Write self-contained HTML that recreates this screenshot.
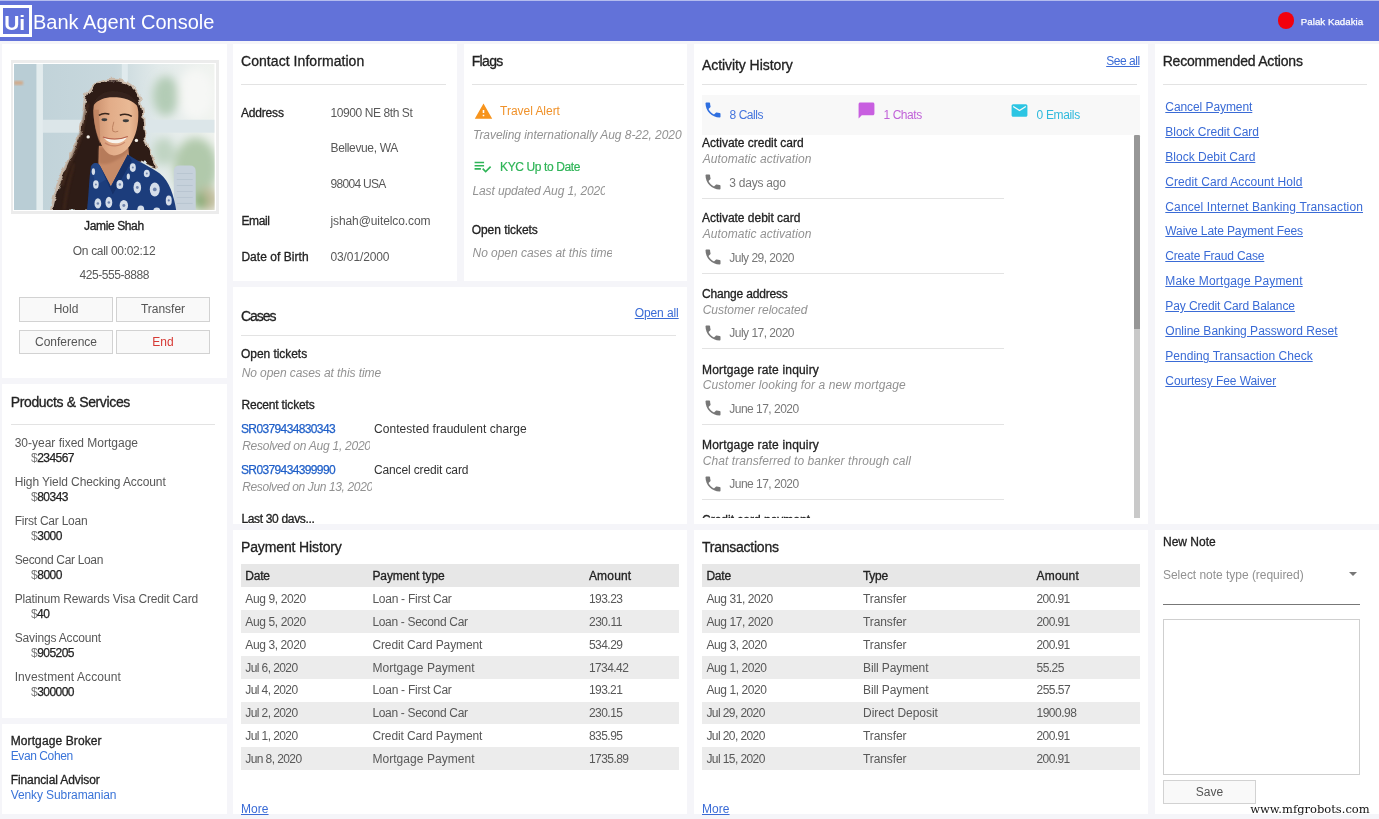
<!DOCTYPE html>
<html lang="en"><head><meta charset="utf-8"><title>UiBank Agent Console</title>
<style>
html,body{margin:0;padding:0}
body{width:1379px;height:819px;overflow:hidden;background:#f5f5f9;position:relative;font-family:"Liberation Sans",sans-serif;font-size:12px;}
#w{position:absolute;left:0;top:0;width:1379px;height:819px;will-change:transform}
.t{position:absolute;white-space:nowrap;line-height:16px;font-size:12px;}
.r{color:#585858}
.d{color:#333}
.b{color:#222;-webkit-text-stroke:0.3px #222}
.i{color:#929292;font-style:italic}
.h{color:#222;font-size:14px;line-height:18px;-webkit-text-stroke:0.3px #222}
.l{color:#3a6bd6;text-decoration:underline;text-underline-offset:0.5px}
.a{color:#3a74d8}
.s{color:#1f5fc8;-webkit-text-stroke:0.25px #1f5fc8}
.amt{color:#222;-webkit-text-stroke:0.25px #222}
.clip{overflow:hidden}
.p{position:absolute;background:#fff}
.hr{position:absolute;height:1px}
.ic{position:absolute}
.hdr{position:absolute;left:0;top:0;width:1379px;height:40.5px;background:#6272d9}
.hdt{position:absolute;left:0;top:0;width:1379px;height:1px;background:#b4bcee}
.logo{position:absolute;left:0;top:5px;width:26px;height:26px;border:3px solid #fff}
.dot{position:absolute;left:1277.5px;top:12.1px;width:16.6px;height:16.6px;border-radius:50%;background:#f2000c}
.frame{position:absolute;left:10.7px;top:60.2px;width:208px;height:153.5px;background:#ececec}
.frin{position:absolute;left:13px;top:62.8px;width:203.1px;height:148.7px;background:#fff}
.photo{position:absolute;left:14.1px;top:64.1px}
.btn{position:absolute;box-sizing:border-box;border:1px solid #d2d2d2;background:#f9f9f9;text-align:center;font-size:12px}
.row{position:absolute;background:#ececec}
.bar{position:absolute;background:#f8f8f8}
.sbt{position:absolute;background:#c9c9c9}
.sbh{position:absolute;background:#979797}
.ta{position:absolute;box-sizing:border-box;border:1px solid #cfcfcf;background:#fff}
.arr{position:absolute;left:1348.5px;top:572px;width:0;height:0;border-left:4.3px solid transparent;border-right:4.3px solid transparent;border-top:4.6px solid #777}
.wm{font-family:"DejaVu Serif","Liberation Serif",serif;font-size:11.5px;color:#111;line-height:16px}
</style></head>
<body>
<div id="w">
<div class="hdr"></div><div class="hdt"></div>
<div class="logo"></div>
<div class="t d" style="left:4.2px;top:10.5px;font-size:21px;letter-spacing:-0.050px;line-height:24px;color:#fff;font-weight:bold;">Ui</div>
<div class="t d" style="left:33.0px;top:10.0px;font-size:20px;letter-spacing:0.009px;line-height:24px;color:#fff;">Bank Agent Console</div>
<div class="dot"></div>
<div class="t d" style="left:1300.8px;top:15.5px;font-size:9.7px;letter-spacing:0.030px;line-height:12px;color:#fff;-webkit-text-stroke:0.25px #fff;">Palak Kadakia</div>
<div class="p" style="left:2.0px;top:44.0px;width:224.5px;height:333.8px;"></div>
<div class="p" style="left:2.0px;top:383.5px;width:224.5px;height:334.3px;"></div>
<div class="p" style="left:2.0px;top:724.0px;width:224.5px;height:90.3px;"></div>
<div class="p" style="left:233.0px;top:44.0px;width:224.0px;height:236.8px;"></div>
<div class="p" style="left:463.5px;top:44.0px;width:223.5px;height:236.8px;"></div>
<div class="p" style="left:233.0px;top:287.0px;width:454.0px;height:236.5px;"></div>
<div class="p" style="left:233.0px;top:530.0px;width:454.0px;height:284.3px;"></div>
<div class="p" style="left:694.0px;top:44.0px;width:453.5px;height:479.5px;"></div>
<div class="p" style="left:694.0px;top:530.0px;width:453.5px;height:284.3px;"></div>
<div class="p" style="left:1154.5px;top:44.0px;width:224.5px;height:479.5px;"></div>
<div class="p" style="left:1154.5px;top:530.0px;width:224.5px;height:284.3px;"></div>
<div class="frame"></div><div class="frin"></div>
<svg class="photo" width="200.7" height="146.4" viewBox="0 0 201 147" preserveAspectRatio="none">
<defs>
<filter id="b1" x="-20%" y="-20%" width="140%" height="140%"><feGaussianBlur stdDeviation="0.9"/></filter>
<filter id="b3" x="-30%" y="-30%" width="160%" height="160%"><feGaussianBlur stdDeviation="5"/></filter>
<filter id="b05" x="-10%" y="-10%" width="120%" height="120%"><feGaussianBlur stdDeviation="0.55"/></filter>
<filter id="curl" x="-10%" y="-10%" width="120%" height="120%"><feTurbulence type="fractalNoise" baseFrequency="0.11" numOctaves="2" seed="7" result="n"/><feDisplacementMap in="SourceGraphic" in2="n" scale="7" xChannelSelector="R" yChannelSelector="G"/><feGaussianBlur stdDeviation="0.6"/></filter>
<linearGradient id="bg" x1="0" x2="1" y1="0" y2="0"><stop offset="0" stop-color="#bfd1d8"/><stop offset="0.5" stop-color="#c8d8dd"/><stop offset="0.72" stop-color="#e2eaea"/><stop offset="1" stop-color="#f0f3ef"/></linearGradient>
<linearGradient id="skin" x1="0" x2="1" y1="0" y2="0"><stop offset="0" stop-color="#c98f6c"/><stop offset="0.35" stop-color="#e2ac88"/><stop offset="0.8" stop-color="#e9b995"/><stop offset="1" stop-color="#d9a17c"/></linearGradient>
<clipPath id="cp"><rect width="201" height="147"/></clipPath>
</defs>
<g clip-path="url(#cp)">
<rect width="201" height="147" fill="url(#bg)"/>
<rect x="0" y="0" width="22.5" height="147" fill="#b9cdd5"/>
<rect x="22.5" y="0" width="6.5" height="147" fill="#e3ecee"/>
<rect x="108" y="0" width="6" height="60" fill="#e0eaed"/>
<g filter="url(#b3)">
<ellipse cx="152" cy="32" rx="13" ry="20" fill="#b3ccb6"/>
<ellipse cx="182" cy="104" rx="22" ry="30" fill="#b1c9ab"/>
<ellipse cx="194" cy="136" rx="12" ry="12" fill="#c2bd9d"/>
<ellipse cx="186" cy="138" rx="7" ry="9" fill="#86ab74"/>
<ellipse cx="182" cy="30" rx="18" ry="26" fill="#f6f7f5"/>
<ellipse cx="150" cy="88" rx="11" ry="14" fill="#c0d4c2"/>
</g>
<rect x="29" y="56" width="172" height="13" fill="#dce6e9" filter="url(#b05)"/>
<rect x="0" y="17" width="9" height="4" fill="#d8a074" opacity=".75" filter="url(#b1)"/>
<!-- chair -->
<path d="M160 108 q0 -6 6 -6 h10 q6 0 6 6 v39 h-22z" fill="#c6d1db" filter="url(#b05)"/>
<path d="M163 110 h16 M163 116 h16 M163 122 h16 M163 128 h16 M163 134 h16 M163 140 h16" stroke="#b4c1cd" stroke-width="1" opacity=".7"/>
<!-- hair halo -->
<path d="M98 15 C82 14 70 26 69 42 C68 56 66 68 59 84 C50 102 42 118 36 147 L80 147 L84 100 L126 98 L146 106 C141 94 135 86 132 72 C130 58 131 46 128 36 C124 22 112 14 98 15Z" fill="#c9ab93" opacity=".7" filter="url(#curl)"/>
<!-- hair -->
<g filter="url(#curl)">
<path d="M98 17.5 C84 16 72 27 71.5 42 C71 56 68 68 62 84 C53 102 45 118 39 147 L80 147 L84 100 L126 98 L143 104 C139 94 134 86 130.5 72 C128.5 58 129 46 126 37 C122.5 24 111 16.5 98 17.5Z" fill="#2e1e18"/>
</g>
<path d="M74 40 C70 52 70 64 65 78 C60 92 52 106 48 122" stroke="#4f3122" stroke-width="2.5" fill="none" opacity=".7" filter="url(#b1)"/>
<path d="M60 100 C56 114 52 128 50 147" stroke="#45291d" stroke-width="3" fill="none" opacity=".6" filter="url(#b1)"/>
<!-- neck -->
<path d="M85 82 L84.5 103 L97 123 L115.5 95 L114.5 84Z" fill="#c78b68" filter="url(#b05)"/>
<path d="M85 84 L85 100 C92 102 104 98 114 88 L114.5 84Z" fill="#a96e50" opacity=".55" filter="url(#b1)"/>
<!-- shirt -->
<path d="M77 103 C80 98 84 99 86 102 L97 123 L114 91 C124 98 138 104 146 110 C156 118 160 132 162.5 147 L73 147 C75 132 75 116 77 103Z" fill="#1d3c7c" filter="url(#b05)"/>
<path d="M86 102 L97 123 L114 91 L118 97 L99 131Z" fill="#15306a" filter="url(#b05)"/>
<path d="M77 103 C80 98 84 99 86 102 L92 116 L82 122Z" fill="#244688" filter="url(#b05)"/>
<!-- floral motifs -->
<g fill="#d5deea" filter="url(#b05)">
<ellipse cx="82" cy="121" rx="2.8" ry="4.2"/><ellipse cx="84" cy="140" rx="3.4" ry="5.2"/><ellipse cx="95" cy="139" rx="3.4" ry="5.6"/>
<ellipse cx="106" cy="121" rx="3.4" ry="4.6"/><ellipse cx="110" cy="142" rx="4.2" ry="5.4"/><ellipse cx="123.5" cy="124" rx="3.8" ry="6"/>
<ellipse cx="127" cy="146" rx="3.4" ry="4"/><ellipse cx="141" cy="126" rx="5" ry="7"/><ellipse cx="143" cy="147" rx="3.4" ry="3"/>
<ellipse cx="119" cy="104" rx="3" ry="4.4"/><ellipse cx="133" cy="110" rx="3" ry="3.8"/><ellipse cx="155" cy="137" rx="3" ry="5"/>
<ellipse cx="79.5" cy="108" rx="1.7" ry="3.4"/><ellipse cx="114.5" cy="113" rx="1.6" ry="3"/>
</g>
<g fill="#1d3c7c" opacity=".55">
<circle cx="82" cy="121" r="1"/><circle cx="84" cy="140" r="1.3"/><circle cx="95" cy="139" r="1.3"/><circle cx="106" cy="121" r="1.2"/><circle cx="110" cy="142" r="1.5"/><circle cx="123.5" cy="124" r="1.4"/><circle cx="141" cy="126" r="1.9"/><circle cx="119" cy="104" r="1"/><circle cx="133" cy="110" r="1"/><circle cx="155" cy="137" r="1.1"/>
</g>
<!-- face -->
<g filter="url(#b05)">
<path d="M79.5 46 C79.5 34 88 29 99 29 C112 29 124 34 124.5 48 C125 60 122.5 72 116 82 C110 90 102 93.5 96 91 C88 87 79.5 66 79.5 46Z" fill="url(#skin)"/>
<path d="M79 42 C82 32 90 27 99 27 C111 27 122 32 125 44 C119 36 110 33.5 99 33.5 C91 33.5 84 36 79 42Z" fill="#34221a"/>
<path d="M79.5 46 C79.5 58 82 70 86 80 C87 70 85 58 85 46Z" fill="#b97c5a" opacity=".6"/>
<path d="M85 51.5 q5 -3 10.5 -1" stroke="#38251c" stroke-width="1.5" fill="none"/><path d="M106 51.5 q6 -2.5 12 1" stroke="#38251c" stroke-width="1.5" fill="none"/>
<ellipse cx="90.5" cy="56" rx="3" ry="1.4" fill="#3e3d3c"/><ellipse cx="112" cy="57" rx="3.1" ry="1.4" fill="#3e3d3c"/>
<path d="M90 74 C96 76.5 105 76.5 113 73.5 C109 81 96 82 90 74Z" fill="#f8f3ec"/>
<path d="M89 73.3 C96 75.8 106 75.8 114 72.8" stroke="#b5614d" stroke-width="1.1" fill="none"/>
<path d="M91 79 C97 83.5 106 83 111 78.5" stroke="#c27a60" stroke-width="1.2" fill="none" opacity=".8"/>
<path d="M100 58 q-2.2 6.5 -1 9.5 q2.4 1.5 5.4 0" stroke="#bd8260" stroke-width="1" fill="none"/>
<circle cx="74.3" cy="73.2" r="1.7" fill="#f6f3ec"/><circle cx="122.6" cy="76.7" r="1.7" fill="#f6f3ec"/>
</g>
</g>
</svg>

<div class="t b" style="left:84.1px;top:218.0px;letter-spacing:-0.377px;">Jamie Shah</div>
<div class="t r" style="left:72.7px;top:243.0px;letter-spacing:-0.300px;">On call 00:02:12</div>
<div class="t r" style="left:79.5px;top:267.0px;letter-spacing:-0.428px;">425-555-8888</div>
<div class="btn" style="left:19.0px;top:297.0px;width:94.0px;height:25.0px;line-height:22.4px;color:#555">Hold</div>
<div class="btn" style="left:116.0px;top:297.0px;width:94.0px;height:25.0px;line-height:22.4px;color:#555">Transfer</div>
<div class="btn" style="left:19.0px;top:330.0px;width:94.0px;height:24.0px;line-height:23.0px;color:#555">Conference</div>
<div class="btn" style="left:116.0px;top:330.0px;width:94.0px;height:24.0px;line-height:23.0px;color:#d63a35">End</div>
<div class="t h" style="left:10.7px;top:393.0px;letter-spacing:-0.355px;">Products &amp; Services</div>
<div class="hr" style="left:10.5px;top:423.5px;width:204.0px;background:#e3e3e3"></div>
<div class="t r" style="left:14.7px;top:435.0px;letter-spacing:-0.005px;">30-year fixed Mortgage</div>
<div class="t r" style="left:31px;top:450.2px;letter-spacing:-0.531px"><span style="color:#777">$</span><span class="amt">234567</span></div>
<div class="t r" style="left:14.7px;top:474.0px;letter-spacing:-0.090px;">High Yield Checking Account</div>
<div class="t r" style="left:31px;top:489.2px;letter-spacing:-0.507px"><span style="color:#777">$</span><span class="amt">80343</span></div>
<div class="t r" style="left:14.7px;top:513.0px;letter-spacing:-0.238px;">First Car Loan</div>
<div class="t r" style="left:31px;top:528.2px;letter-spacing:-0.474px"><span style="color:#777">$</span><span class="amt">3000</span></div>
<div class="t r" style="left:14.7px;top:552.0px;letter-spacing:-0.340px;">Second Car Loan</div>
<div class="t r" style="left:31px;top:567.2px;letter-spacing:-0.474px"><span style="color:#777">$</span><span class="amt">8000</span></div>
<div class="t r" style="left:14.7px;top:591.0px;letter-spacing:-0.158px;">Platinum Rewards Visa Credit Card</div>
<div class="t r" style="left:31px;top:606.2px;letter-spacing:-0.574px"><span style="color:#777">$</span><span class="amt">40</span></div>
<div class="t r" style="left:14.7px;top:630.0px;letter-spacing:-0.162px;">Savings Account</div>
<div class="t r" style="left:31px;top:645.2px;letter-spacing:-0.531px"><span style="color:#777">$</span><span class="amt">905205</span></div>
<div class="t r" style="left:14.7px;top:669.0px;letter-spacing:0.088px;">Investment Account</div>
<div class="t r" style="left:31px;top:684.2px;letter-spacing:-0.531px"><span style="color:#777">$</span><span class="amt">300000</span></div>
<div class="t b" style="left:10.7px;top:733.0px;letter-spacing:0.108px;">Mortgage Broker</div>
<div class="t a" style="left:10.7px;top:748.0px;letter-spacing:-0.405px;">Evan Cohen</div>
<div class="t b" style="left:10.7px;top:772.0px;letter-spacing:-0.101px;">Financial Advisor</div>
<div class="t a" style="left:10.7px;top:787.0px;letter-spacing:-0.100px;">Venky Subramanian</div>
<div class="t h" style="left:241.0px;top:52.0px;letter-spacing:0.059px;">Contact Information</div>
<div class="hr" style="left:241.0px;top:83.8px;width:204.7px;background:#e3e3e3"></div>
<div class="t b" style="left:241.0px;top:105.0px;letter-spacing:-0.189px;">Address</div>
<div class="t r" style="left:330.5px;top:105.0px;letter-spacing:-0.417px;">10900 NE 8th St</div>
<div class="t r" style="left:330.5px;top:140.0px;letter-spacing:-0.357px;">Bellevue, WA</div>
<div class="t r" style="left:330.5px;top:176.0px;letter-spacing:-0.697px;">98004 USA</div>
<div class="t b" style="left:241.4px;top:213.0px;letter-spacing:-0.381px;">Email</div>
<div class="t r" style="left:330.5px;top:213.0px;letter-spacing:-0.098px;">jshah@uitelco.com</div>
<div class="t b" style="left:241.4px;top:249.0px;letter-spacing:0.039px;">Date of Birth</div>
<div class="t r" style="left:330.5px;top:249.0px;letter-spacing:-0.116px;">03/01/2000</div>
<div class="t h" style="left:471.7px;top:52.0px;letter-spacing:-0.647px;">Flags</div>
<div class="hr" style="left:472.0px;top:83.8px;width:212.2px;background:#e3e3e3"></div>
<svg class="ic" style="left:473.9px;top:102.3px" width="19" height="19" viewBox="0 0 24 24"><path fill="#f7941d" d="M1 21h22L12 2 1 21zm12-3h-2v-2h2v2zm0-4h-2v-4h2v4z"/></svg>
<div class="t r" style="left:500.1px;top:103.0px;letter-spacing:-0.037px;color:#f0922b;">Travel Alert</div>
<div class="t i" style="left:473.0px;top:127.0px;letter-spacing:-0.055px;">Traveling internationally Aug 8-22, 2020</div>
<svg class="ic" style="left:473.4px;top:157.3px" width="19" height="19" viewBox="0 0 24 24"><path fill="#2fb457" d="M14 10H2v2h12v-2zm0-4H2v2h12V6zM2 16h8v-2H2v2zm19.5-4.5L23 13l-6.99 7-4.51-4.5L13 14l3.01 3 5.49-5.5z"/></svg>
<div class="t r" style="left:500.1px;top:159.0px;letter-spacing:-0.384px;color:#2fb457;-webkit-text-stroke:0.2px #2fb457;">KYC Up to Date</div>
<div class="t i clip" style="left:472.5px;top:182.6px;width:132.4px;letter-spacing:-0.12px">Last updated Aug 1, 2020</div>
<div class="t b" style="left:471.7px;top:222.0px;letter-spacing:-0.050px;">Open tickets</div>
<div class="t i clip" style="left:472.5px;top:244.5px;width:139.2px;letter-spacing:-0.03px">No open cases at this time</div>
<div class="t h" style="left:241.0px;top:307.0px;letter-spacing:-1.057px;">Cases</div>
<div class="t l" style="left:634.7px;top:305.0px;letter-spacing:-0.087px;">Open all</div>
<div class="hr" style="left:241.0px;top:334.7px;width:434.7px;background:#e3e3e3"></div>
<div class="t b" style="left:241.0px;top:346.0px;letter-spacing:-0.050px;">Open tickets</div>
<div class="t i" style="left:241.7px;top:365.0px;letter-spacing:-0.081px;">No open cases at this time</div>
<div class="t b" style="left:241.4px;top:397.0px;letter-spacing:-0.162px;">Recent tickets</div>
<div class="t s" style="left:241.0px;top:421.0px;letter-spacing:-0.629px;">SR0379434830343</div>
<div class="t d" style="left:374.0px;top:421.0px;letter-spacing:0.047px;">Contested fraudulent charge</div>
<div class="t i clip" style="left:242.2px;top:438.2px;width:127.6px;letter-spacing:-0.25px">Resolved on Aug 1, 2020</div>
<div class="t s" style="left:241.0px;top:462.0px;letter-spacing:-0.629px;">SR0379434399990</div>
<div class="t d" style="left:374.0px;top:462.0px;letter-spacing:-0.134px;">Cancel credit card</div>
<div class="t i clip" style="left:242.2px;top:478.6px;width:129.6px;letter-spacing:-0.37px">Resolved on Jun 13, 2020</div>
<div class="t b clip" style="left:241.4px;top:510.9px;width:200px;height:12.6px;letter-spacing:-0.33px">Last 30 days...</div>
<div class="t h" style="left:241.0px;top:538.0px;letter-spacing:-0.133px;">Payment History</div>
<div class="row" style="left:241.0px;top:564.3px;width:438.0px;height:22.9px;background:#e7e7e7;"></div>
<div class="t b" style="left:245.3px;top:568.0px;letter-spacing:-0.212px;">Date</div>
<div class="t b" style="left:372.4px;top:568.0px;letter-spacing:-0.089px;">Payment type</div>
<div class="t b" style="left:588.9px;top:568.0px;letter-spacing:0.191px;">Amount</div>
<div class="t r" style="left:245.3px;top:591.0px;letter-spacing:-0.375px;">Aug 9, 2020</div>
<div class="t r" style="left:372.4px;top:591.0px;letter-spacing:-0.260px;">Loan - First Car</div>
<div class="t r" style="left:588.9px;top:591.0px;letter-spacing:-0.517px;">193.23</div>
<div class="row" style="left:241.0px;top:610.0px;width:438.0px;height:22.9px;"></div>
<div class="t r" style="left:245.3px;top:614.0px;letter-spacing:-0.375px;">Aug 5, 2020</div>
<div class="t r" style="left:372.4px;top:614.0px;letter-spacing:-0.319px;">Loan - Second Car</div>
<div class="t r" style="left:588.9px;top:614.0px;letter-spacing:-0.435px;">230.11</div>
<div class="t r" style="left:245.3px;top:637.0px;letter-spacing:-0.393px;">Aug 3, 2020</div>
<div class="t r" style="left:372.4px;top:637.0px;letter-spacing:-0.113px;">Credit Card Payment</div>
<div class="t r" style="left:588.9px;top:637.0px;letter-spacing:-0.517px;">534.29</div>
<div class="row" style="left:241.0px;top:655.7px;width:438.0px;height:22.9px;"></div>
<div class="t r" style="left:245.3px;top:660.0px;letter-spacing:-0.592px;">Jul 6, 2020</div>
<div class="t r" style="left:372.4px;top:660.0px;letter-spacing:0.051px;">Mortgage Payment</div>
<div class="t r" style="left:588.9px;top:660.0px;letter-spacing:-0.568px;">1734.42</div>
<div class="t r" style="left:245.3px;top:682.0px;letter-spacing:-0.592px;">Jul 4, 2020</div>
<div class="t r" style="left:372.4px;top:682.0px;letter-spacing:-0.260px;">Loan - First Car</div>
<div class="t r" style="left:588.9px;top:682.0px;letter-spacing:-0.551px;">193.21</div>
<div class="row" style="left:241.0px;top:701.5px;width:438.0px;height:22.9px;"></div>
<div class="t r" style="left:245.3px;top:705.0px;letter-spacing:-0.592px;">Jul 2, 2020</div>
<div class="t r" style="left:372.4px;top:705.0px;letter-spacing:-0.319px;">Loan - Second Car</div>
<div class="t r" style="left:588.9px;top:705.0px;letter-spacing:-0.517px;">230.15</div>
<div class="t r" style="left:245.3px;top:728.0px;letter-spacing:-0.592px;">Jul 1, 2020</div>
<div class="t r" style="left:372.4px;top:728.0px;letter-spacing:-0.113px;">Credit Card Payment</div>
<div class="t r" style="left:588.9px;top:728.0px;letter-spacing:-0.517px;">835.95</div>
<div class="row" style="left:241.0px;top:747.2px;width:438.0px;height:22.9px;"></div>
<div class="t r" style="left:245.3px;top:751.0px;letter-spacing:-0.593px;">Jun 8, 2020</div>
<div class="t r" style="left:372.4px;top:751.0px;letter-spacing:0.051px;">Mortgage Payment</div>
<div class="t r" style="left:588.9px;top:751.0px;letter-spacing:-0.540px;">1735.89</div>
<div class="t l" style="left:241.0px;top:801.0px;letter-spacing:0.050px;">More</div>
<div class="t h" style="left:702.0px;top:538.0px;letter-spacing:-0.244px;">Transactions</div>
<div class="row" style="left:702.0px;top:564.3px;width:437.8px;height:22.9px;background:#e7e7e7;"></div>
<div class="t b" style="left:706.4px;top:568.0px;letter-spacing:-0.212px;">Date</div>
<div class="t b" style="left:863.0px;top:568.0px;letter-spacing:-0.304px;">Type</div>
<div class="t b" style="left:1036.5px;top:568.0px;letter-spacing:0.191px;">Amount</div>
<div class="t r" style="left:706.4px;top:591.0px;letter-spacing:-0.416px;">Aug 31, 2020</div>
<div class="t r" style="left:863.0px;top:591.0px;letter-spacing:-0.104px;">Transfer</div>
<div class="t r" style="left:1036.5px;top:591.0px;letter-spacing:-0.584px;">200.91</div>
<div class="row" style="left:702.0px;top:610.0px;width:437.8px;height:22.9px;"></div>
<div class="t r" style="left:706.4px;top:614.0px;letter-spacing:-0.416px;">Aug 17, 2020</div>
<div class="t r" style="left:863.0px;top:614.0px;letter-spacing:-0.104px;">Transfer</div>
<div class="t r" style="left:1036.5px;top:614.0px;letter-spacing:-0.584px;">200.91</div>
<div class="t r" style="left:706.4px;top:637.0px;letter-spacing:-0.393px;">Aug 3, 2020</div>
<div class="t r" style="left:863.0px;top:637.0px;letter-spacing:-0.104px;">Transfer</div>
<div class="t r" style="left:1036.5px;top:637.0px;letter-spacing:-0.584px;">200.91</div>
<div class="row" style="left:702.0px;top:655.7px;width:437.8px;height:22.9px;"></div>
<div class="t r" style="left:706.4px;top:660.0px;letter-spacing:-0.411px;">Aug 1, 2020</div>
<div class="t r" style="left:863.0px;top:660.0px;letter-spacing:-0.108px;">Bill Payment</div>
<div class="t r" style="left:1036.5px;top:660.0px;letter-spacing:-0.526px;">55.25</div>
<div class="t r" style="left:706.4px;top:682.0px;letter-spacing:-0.411px;">Aug 1, 2020</div>
<div class="t r" style="left:863.0px;top:682.0px;letter-spacing:-0.108px;">Bill Payment</div>
<div class="t r" style="left:1036.5px;top:682.0px;letter-spacing:-0.517px;">255.57</div>
<div class="row" style="left:702.0px;top:701.5px;width:437.8px;height:22.9px;"></div>
<div class="t r" style="left:706.4px;top:705.0px;letter-spacing:-0.582px;">Jul 29, 2020</div>
<div class="t r" style="left:863.0px;top:705.0px;letter-spacing:-0.040px;">Direct Deposit</div>
<div class="t r" style="left:1036.5px;top:705.0px;letter-spacing:-0.511px;">1900.98</div>
<div class="t r" style="left:706.4px;top:728.0px;letter-spacing:-0.582px;">Jul 20, 2020</div>
<div class="t r" style="left:863.0px;top:728.0px;letter-spacing:-0.104px;">Transfer</div>
<div class="t r" style="left:1036.5px;top:728.0px;letter-spacing:-0.584px;">200.91</div>
<div class="row" style="left:702.0px;top:747.2px;width:437.8px;height:22.9px;"></div>
<div class="t r" style="left:706.4px;top:751.0px;letter-spacing:-0.582px;">Jul 15, 2020</div>
<div class="t r" style="left:863.0px;top:751.0px;letter-spacing:-0.104px;">Transfer</div>
<div class="t r" style="left:1036.5px;top:751.0px;letter-spacing:-0.584px;">200.91</div>
<div class="t l" style="left:702.0px;top:801.0px;letter-spacing:0.050px;">More</div>
<div class="t h" style="left:702.0px;top:56.0px;letter-spacing:-0.068px;">Activity History</div>
<div class="t l" style="left:1106.2px;top:53.0px;letter-spacing:-0.470px;">See all</div>
<div class="hr" style="left:701.5px;top:83.8px;width:435.6px;background:#e3e3e3"></div>
<div class="bar" style="left:702.0px;top:95.0px;width:437.6px;height:40.0px;"></div>
<svg class="ic" style="left:702.9px;top:100.4px" width="20" height="20" viewBox="0 0 24 24"><path fill="#2f6fe0" d="M6.62 10.79c1.44 2.83 3.76 5.14 6.59 6.59l2.2-2.2c.27-.27.67-.36 1.02-.24 1.12.37 2.33.57 3.57.57.55 0 1 .45 1 1V20c0 .55-.45 1-1 1-9.39 0-17-7.61-17-17 0-.55.45-1 1-1h3.5c.55 0 1 .45 1 1 0 1.25.2 2.45.57 3.57.11.35.03.74-.25 1.02l-2.2 2.2z"/></svg>
<div class="t r" style="left:729.6px;top:107.0px;letter-spacing:-0.483px;color:#4374dd;">8 Calls</div>
<svg class="ic" style="left:856.8px;top:100.6px" width="19" height="19" viewBox="0 0 24 24"><path fill="#c85fe0" d="M20 2H4c-1.1 0-2 .9-2 2v18l4-4h14c1.1 0 2-.9 2-2V4c0-1.1-.9-2-2-2z"/></svg>
<div class="t r" style="left:883.5px;top:107.0px;letter-spacing:-0.437px;color:#c062d8;">1 Chats</div>
<svg class="ic" style="left:1010.4px;top:100.7px" width="19" height="19" viewBox="0 0 24 24"><path fill="#2cc5e3" d="M20 4H4c-1.1 0-1.99.9-1.99 2L2 18c0 1.1.9 2 2 2h16c1.1 0 2-.9 2-2V6c0-1.1-.9-2-2-2zm0 4l-8 5-8-5V6l8 5 8-5v2z"/></svg>
<div class="t r" style="left:1036.6px;top:107.0px;letter-spacing:-0.352px;color:#2fb9dc;">0 Emails</div>
<div class="sbt" style="left:1134.1px;top:135.4px;width:5.5px;height:383.0px;"></div>
<div class="sbh" style="left:1134.1px;top:135.4px;width:5.5px;height:193.9px;border-radius:1.5px 1.5px 0 0;"></div>
<div class="t b" style="left:702.0px;top:135.0px;letter-spacing:-0.022px;">Activate credit card</div>
<div class="t i" style="left:702.7px;top:151.0px;letter-spacing:0.066px;">Automatic activation</div>
<svg class="ic" style="left:702.7px;top:171.7px" width="20" height="20" viewBox="0 0 24 24"><path fill="#777" d="M6.62 10.79c1.44 2.83 3.76 5.14 6.59 6.59l2.2-2.2c.27-.27.67-.36 1.02-.24 1.12.37 2.33.57 3.57.57.55 0 1 .45 1 1V20c0 .55-.45 1-1 1-9.39 0-17-7.61-17-17 0-.55.45-1 1-1h3.5c.55 0 1 .45 1 1 0 1.25.2 2.45.57 3.57.11.35.03.74-.25 1.02l-2.2 2.2z"/></svg>
<div class="t r" style="left:729.3px;top:175.0px;letter-spacing:-0.231px;color:#777;">3 days ago</div>
<div class="hr" style="left:702.0px;top:197.5px;width:302.0px;background:#e3e3e3"></div>
<div class="t b" style="left:702.0px;top:210.0px;letter-spacing:-0.022px;">Activate debit card</div>
<div class="t i" style="left:702.7px;top:226.0px;letter-spacing:0.066px;">Automatic activation</div>
<svg class="ic" style="left:702.7px;top:246.9px" width="20" height="20" viewBox="0 0 24 24"><path fill="#777" d="M6.62 10.79c1.44 2.83 3.76 5.14 6.59 6.59l2.2-2.2c.27-.27.67-.36 1.02-.24 1.12.37 2.33.57 3.57.57.55 0 1 .45 1 1V20c0 .55-.45 1-1 1-9.39 0-17-7.61-17-17 0-.55.45-1 1-1h3.5c.55 0 1 .45 1 1 0 1.25.2 2.45.57 3.57.11.35.03.74-.25 1.02l-2.2 2.2z"/></svg>
<div class="t r" style="left:729.3px;top:250.0px;letter-spacing:-0.514px;color:#777;">July 29, 2020</div>
<div class="hr" style="left:702.0px;top:272.7px;width:302.0px;background:#e3e3e3"></div>
<div class="t b" style="left:702.0px;top:286.0px;letter-spacing:-0.169px;">Change address</div>
<div class="t i" style="left:702.7px;top:302.0px;">Customer relocated</div>
<svg class="ic" style="left:702.7px;top:322.5px" width="20" height="20" viewBox="0 0 24 24"><path fill="#777" d="M6.62 10.79c1.44 2.83 3.76 5.14 6.59 6.59l2.2-2.2c.27-.27.67-.36 1.02-.24 1.12.37 2.33.57 3.57.57.55 0 1 .45 1 1V20c0 .55-.45 1-1 1-9.39 0-17-7.61-17-17 0-.55.45-1 1-1h3.5c.55 0 1 .45 1 1 0 1.25.2 2.45.57 3.57.11.35.03.74-.25 1.02l-2.2 2.2z"/></svg>
<div class="t r" style="left:729.3px;top:325.0px;letter-spacing:-0.514px;color:#777;">July 17, 2020</div>
<div class="hr" style="left:702.0px;top:348.3px;width:302.0px;background:#e3e3e3"></div>
<div class="t b" style="left:702.0px;top:362.0px;letter-spacing:0.172px;">Mortgage rate inquiry</div>
<div class="t i" style="left:702.7px;top:377.0px;letter-spacing:0.083px;">Customer looking for a new mortgage</div>
<svg class="ic" style="left:702.7px;top:398.0px" width="20" height="20" viewBox="0 0 24 24"><path fill="#777" d="M6.62 10.79c1.44 2.83 3.76 5.14 6.59 6.59l2.2-2.2c.27-.27.67-.36 1.02-.24 1.12.37 2.33.57 3.57.57.55 0 1 .45 1 1V20c0 .55-.45 1-1 1-9.39 0-17-7.61-17-17 0-.55.45-1 1-1h3.5c.55 0 1 .45 1 1 0 1.25.2 2.45.57 3.57.11.35.03.74-.25 1.02l-2.2 2.2z"/></svg>
<div class="t r" style="left:729.3px;top:401.0px;letter-spacing:-0.521px;color:#777;">June 17, 2020</div>
<div class="hr" style="left:702.0px;top:423.8px;width:302.0px;background:#e3e3e3"></div>
<div class="t b" style="left:702.0px;top:437.0px;letter-spacing:0.172px;">Mortgage rate inquiry</div>
<div class="t i" style="left:702.7px;top:453.0px;letter-spacing:0.073px;">Chat transferred to banker through call</div>
<svg class="ic" style="left:702.7px;top:473.6px" width="20" height="20" viewBox="0 0 24 24"><path fill="#777" d="M6.62 10.79c1.44 2.83 3.76 5.14 6.59 6.59l2.2-2.2c.27-.27.67-.36 1.02-.24 1.12.37 2.33.57 3.57.57.55 0 1 .45 1 1V20c0 .55-.45 1-1 1-9.39 0-17-7.61-17-17 0-.55.45-1 1-1h3.5c.55 0 1 .45 1 1 0 1.25.2 2.45.57 3.57.11.35.03.74-.25 1.02l-2.2 2.2z"/></svg>
<div class="t r" style="left:729.3px;top:476.0px;letter-spacing:-0.521px;color:#777;">June 17, 2020</div>
<div class="hr" style="left:702.0px;top:499.4px;width:302.0px;background:#e3e3e3"></div>
<div class="t b clip" style="left:702px;top:512px;width:200px;height:6.4px;">Credit card payment</div>
<div class="t h" style="left:1162.7px;top:52.0px;letter-spacing:-0.209px;">Recommended Actions</div>
<div class="hr" style="left:1162.7px;top:83.8px;width:204.6px;background:#e3e3e3"></div>
<div class="t l" style="left:1165.3px;top:99.0px;letter-spacing:-0.075px;">Cancel Payment</div>
<div class="t l" style="left:1165.3px;top:124.0px;letter-spacing:-0.020px;">Block Credit Card</div>
<div class="t l" style="left:1165.3px;top:149.0px;">Block Debit Card</div>
<div class="t l" style="left:1165.3px;top:174.0px;letter-spacing:0.079px;">Credit Card Account Hold</div>
<div class="t l" style="left:1165.3px;top:199.0px;letter-spacing:0.121px;">Cancel Internet Banking Transaction</div>
<div class="t l" style="left:1165.3px;top:223.0px;letter-spacing:-0.112px;">Waive Late Payment Fees</div>
<div class="t l" style="left:1165.3px;top:248.0px;letter-spacing:-0.179px;">Create Fraud Case</div>
<div class="t l" style="left:1165.3px;top:273.0px;letter-spacing:0.159px;">Make Mortgage Payment</div>
<div class="t l" style="left:1165.3px;top:298.0px;letter-spacing:-0.107px;">Pay Credit Card Balance</div>
<div class="t l" style="left:1165.3px;top:323.0px;letter-spacing:0.007px;">Online Banking Password Reset</div>
<div class="t l" style="left:1165.3px;top:348.0px;letter-spacing:0.026px;">Pending Transaction Check</div>
<div class="t l" style="left:1165.3px;top:373.0px;letter-spacing:-0.077px;">Courtesy Fee Waiver</div>
<div class="t b" style="left:1163.0px;top:534.0px;">New Note</div>
<div class="t r" style="left:1163.0px;top:567.0px;letter-spacing:-0.030px;color:#919191;">Select note type (required)</div>
<div class="arr"></div>
<div class="hr" style="left:1163.0px;top:603.8px;width:196.6px;background:#777"></div>
<div class="ta" style="left:1163.0px;top:619.4px;width:196.6px;height:155.9px;"></div>
<div class="btn" style="left:1163.0px;top:780.0px;width:93.0px;height:24.0px;line-height:23.0px;color:#555">Save</div>
<div class="t wm" style="left:1250.2px;top:801.2px;">www.mfgrobots.com</div>
</div>
</body></html>
